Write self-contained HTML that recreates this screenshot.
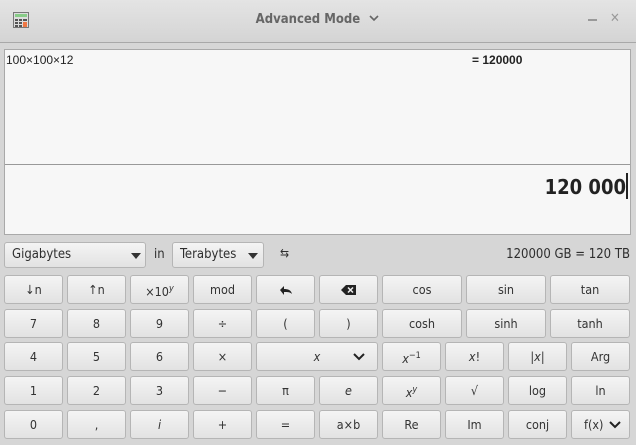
<!DOCTYPE html>
<html><head><style>
*{box-sizing:border-box;margin:0;padding:0}
body{width:636px;height:445px;background:#d6d6d6;font-family:"DejaVu Sans Condensed","DejaVu Sans","Liberation Sans",sans-serif;font-stretch:condensed;font-size:12.5px;color:#2e2e2e;position:relative;overflow:hidden}
.title{position:absolute;left:0;top:0;width:636px;height:43px;background:linear-gradient(#e4e4e4,#d4d4d4);border-bottom:1px solid #a8a8a8}
.title .t{position:absolute;left:0;width:636px;top:12px;text-align:center;font-weight:bold;color:#666;font-size:13px}
.disp{position:absolute;left:4px;top:49px;width:627px;height:186px;background:#f7f7f7;border:1px solid #a9a9a9}
.b{position:absolute;height:29px;border:1px solid #b5b5b5;border-radius:3px;background:linear-gradient(#f4f4f4,#e2e2e2);text-align:center;line-height:27px;font-size:12.5px;color:#333}
.dd{position:absolute;height:26px;top:242px;border:1px solid #b5b5b5;border-radius:3px;background:linear-gradient(#f4f4f4,#e2e2e2);line-height:24px;padding-left:7px;font-size:13px}
.tri{position:absolute;width:0;height:0;border-left:5px solid transparent;border-right:5px solid transparent;border-top:6px solid #333;top:10px}
i{font-style:italic}
</style></head><body>
<div class="title">
<svg style="position:absolute;left:13px;top:12px" width="16" height="16"><rect x="0.5" y="0.5" width="15" height="15" fill="#ddd" stroke="#777"/><rect x="2" y="2" width="12" height="3" fill="#8c8"/><g fill="#555"><rect x="2" y="7" width="3" height="2"/><rect x="6" y="7" width="3" height="2"/><rect x="2" y="10" width="3" height="2"/><rect x="6" y="10" width="3" height="2"/><rect x="2" y="13" width="3" height="2"/><rect x="6" y="13" width="3" height="2"/></g><rect x="10" y="7" width="4" height="2" fill="#555"/><rect x="10" y="10" width="4" height="5" fill="#e74"/></svg>
<div class="t">Advanced Mode <svg width="12" height="10" style="margin-left:4px"><path d="M2 3l4 4 4-4" stroke="#666" stroke-width="1.6" fill="none"/></svg></div>
<div style="position:absolute;left:588px;top:19px;width:9px;height:1.5px;background:#999"></div>
<div style="position:absolute;left:610px;top:11px;color:#999;font-size:13px">✕</div>
</div>
<div class="disp">
<div style="position:absolute;left:1px;top:3px;font-family:'Liberation Sans',sans-serif;font-size:12px;color:#222">100×100×12</div>
<div style="position:absolute;left:467px;top:3px;font-family:'Liberation Sans',sans-serif;font-size:12px;font-weight:bold;color:#222">= 120000</div>
<div style="position:absolute;left:0;top:114px;width:625px;height:1px;background:#999"></div>
<div style="position:absolute;right:4px;top:125px;font-size:20px;font-weight:bold;color:#222">120 000</div>
<div style="position:absolute;left:621px;top:123px;width:1.5px;height:26px;background:#222"></div>
</div>
<div class="dd" style="left:4px;width:142px">Gigabytes<span class="tri" style="left:126px"></span></div>
<div style="position:absolute;left:154px;top:247px;font-size:13px">in</div>
<div class="dd" style="left:172px;width:92px">Terabytes<span class="tri" style="left:75px"></span></div>
<div style="position:absolute;left:280px;top:246px;font-size:12px">⇆</div>
<div style="position:absolute;right:6px;top:247px;font-size:13px">120000 GB = 120 TB</div>

<div class="b" style="left:4px;top:275px;width:59px">↓n</div>
<div class="b" style="left:67px;top:275px;width:59px">↑n</div>
<div class="b" style="left:130px;top:275px;width:59px">×10<sup style="font-size:9px"><i>y</i></sup></div>
<div class="b" style="left:193px;top:275px;width:59px">mod</div>
<div class="b" style="left:256px;top:275px;width:59px"><svg width="14" height="10" style="margin-top:9px"><path d="M1 5l4-4v3c4 0 7 1 8 5c-2-2-4-2-8-2v3z" fill="#222"/></svg></div>
<div class="b" style="left:319px;top:275px;width:59px"><svg width="16" height="12" style="margin-top:8px"><path d="M5 1h10v10H5L0 6z" fill="#222"/><path d="M7 3.5l5 5M12 3.5l-5 5" stroke="#eee" stroke-width="1.5"/></svg></div>
<div class="b" style="left:382px;top:275px;width:80px">cos</div>
<div class="b" style="left:466px;top:275px;width:80px">sin</div>
<div class="b" style="left:550px;top:275px;width:80px">tan</div>

<div class="b" style="left:4px;top:309px;width:59px">7</div>
<div class="b" style="left:67px;top:309px;width:59px">8</div>
<div class="b" style="left:130px;top:309px;width:59px">9</div>
<div class="b" style="left:193px;top:309px;width:59px">÷</div>
<div class="b" style="left:256px;top:309px;width:59px">(</div>
<div class="b" style="left:319px;top:309px;width:59px">)</div>
<div class="b" style="left:382px;top:309px;width:80px">cosh</div>
<div class="b" style="left:466px;top:309px;width:80px">sinh</div>
<div class="b" style="left:550px;top:309px;width:80px">tanh</div>

<div class="b" style="left:4px;top:342px;width:59px">4</div>
<div class="b" style="left:67px;top:342px;width:59px">5</div>
<div class="b" style="left:130px;top:342px;width:59px">6</div>
<div class="b" style="left:193px;top:342px;width:59px">×</div>
<div class="b" style="left:256px;top:342px;width:122px"><i>x</i><svg width="12" height="8" style="position:absolute;right:12px;top:10px"><path d="M1 1l5 5 5-5" stroke="#222" stroke-width="2" fill="none"/></svg></div>
<div class="b" style="left:382px;top:342px;width:59px"><i>x</i><sup style="font-size:9px">−1</sup></div>
<div class="b" style="left:445px;top:342px;width:59px"><i>x</i>!</div>
<div class="b" style="left:508px;top:342px;width:59px">|<i>x</i>|</div>
<div class="b" style="left:571px;top:342px;width:59px">Arg</div>

<div class="b" style="left:4px;top:376px;width:59px">1</div>
<div class="b" style="left:67px;top:376px;width:59px">2</div>
<div class="b" style="left:130px;top:376px;width:59px">3</div>
<div class="b" style="left:193px;top:376px;width:59px">−</div>
<div class="b" style="left:256px;top:376px;width:59px">π</div>
<div class="b" style="left:319px;top:376px;width:59px"><i>e</i></div>
<div class="b" style="left:382px;top:376px;width:59px"><i>x</i><sup style="font-size:9px"><i>y</i></sup></div>
<div class="b" style="left:445px;top:376px;width:59px">√</div>
<div class="b" style="left:508px;top:376px;width:59px">log</div>
<div class="b" style="left:571px;top:376px;width:59px">ln</div>

<div class="b" style="left:4px;top:410px;width:59px">0</div>
<div class="b" style="left:67px;top:410px;width:59px">,</div>
<div class="b" style="left:130px;top:410px;width:59px"><i>i</i></div>
<div class="b" style="left:193px;top:410px;width:59px">+</div>
<div class="b" style="left:256px;top:410px;width:59px">=</div>
<div class="b" style="left:319px;top:410px;width:59px">a×b</div>
<div class="b" style="left:382px;top:410px;width:59px">Re</div>
<div class="b" style="left:445px;top:410px;width:59px">Im</div>
<div class="b" style="left:508px;top:410px;width:59px">conj</div>
<div class="b" style="left:571px;top:410px;width:59px;text-align:left;padding-left:12px">f(x)<svg width="12" height="8" style="position:absolute;right:8px;top:10px"><path d="M1 1l5 5 5-5" stroke="#222" stroke-width="2" fill="none"/></svg></div>
</body></html>
